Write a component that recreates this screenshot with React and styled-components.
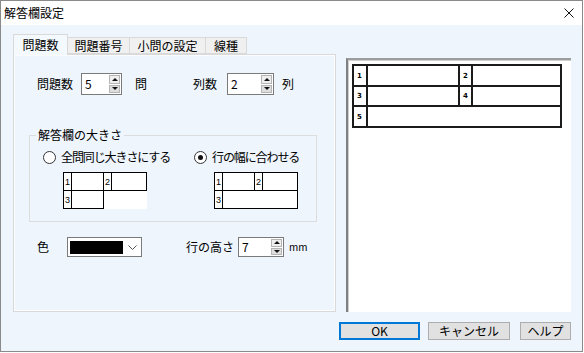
import React from "react";
import styled, { createGlobalStyle } from "styled-components";

const GlobalStyle = createGlobalStyle`
  html, body {
    margin: 0;
    padding: 0;
    background: #ffffff;
  }
  body {
    font-family: "Noto Sans CJK JP", "Noto Sans", sans-serif;
    font-size: 12px;
    color: #000;
  }
`;

const Window = styled.div`
  width: 583px;
  height: 352px;
  box-sizing: border-box;
  border: 1px solid #8a8a8a;
  background: #eef5fd;
  display: flex;
  flex-direction: column;
`;

const TitleBar = styled.div`
  height: 24px;
  flex: none;
  background: #fff;
  display: flex;
  align-items: center;
  justify-content: space-between;
  padding: 0 8px 0 3px;
  line-height: 14px;
`;

const Body = styled.div`
  flex: 1;
  padding: 9px 11px 0 12px;
  display: flex;
  flex-direction: column;
`;

const MainRow = styled.div`
  display: flex;
  gap: 10px;
`;

const TabArea = styled.div`
  width: 323px;
  display: flex;
  flex-direction: column;
`;

const TabStrip = styled.div`
  height: 20px;
  display: flex;
  align-items: flex-end;
`;

const Tab = styled.div`
  box-sizing: border-box;
  width: ${(p) => p.$w}px;
  height: ${(p) => (p.$active ? 21 : 17)}px;
  margin-bottom: ${(p) => (p.$active ? -1 : 0)}px;
  margin-left: ${(p) => (p.$first ? 0 : -1)}px;
  border: 1px solid #d9d9d9;
  border-bottom: ${(p) => (p.$active ? "none" : "1px solid #d9d9d9")};
  background: ${(p) => (p.$active ? "#f4f9fe" : "#f0f0f0")};
  position: relative;
  z-index: ${(p) => (p.$active ? 2 : 1)};
  display: flex;
  align-items: center;
  justify-content: center;
  line-height: 14px;
  padding-top: ${(p) => (p.$active ? 0 : 1)}px;
`;

const Panel = styled.div`
  height: 258px;
  box-sizing: border-box;
  border: 1px solid #d9d9d9;
  box-shadow: inset 0 0 0 1px #fafcff;
  background: #eef5fd;
  display: flex;
  flex-direction: column;
`;

const FieldRow = styled.div`
  display: grid;
  grid-template-columns: ${(p) => p.$cols};
  align-items: center;
  height: ${(p) => p.$h}px;
  margin: ${(p) => p.$mt}px 0 0 23px;
  line-height: 14px;
`;

const Unit = styled.span`
  padding-left: ${(p) => p.$pl}px;
  font-size: ${(p) => p.$fs || 12}px;
`;

const SpinBox = styled.div`
  box-sizing: border-box;
  width: ${(p) => p.$w}px;
  height: ${(p) => p.$h}px;
  border: 1px solid #7a7a7a;
  background: #fff;
  display: flex;
  align-items: stretch;
  padding: 1px;
`;

const SpinValue = styled.div`
  flex: 1;
  padding-left: 2px;
  display: flex;
  align-items: center;
  line-height: 14px;
`;

const SpinButtons = styled.div`
  width: 11px;
  display: flex;
  flex-direction: column;
  gap: 1px;
`;

const SpinButton = styled.div`
  flex: 1;
  box-sizing: border-box;
  border: 1px solid #b4b4b4;
  background: ${(p) => (p.$down ? "#dedede" : "#efefef")};
  display: flex;
  align-items: center;
  justify-content: center;
`;

const Arrow = styled.span`
  width: 0;
  height: 0;
  border-left: 3px solid transparent;
  border-right: 3px solid transparent;
  ${(p) =>
    p.$down ? "border-top: 3px solid #111;" : "border-bottom: 3px solid #111;"}
`;

const GroupBox = styled.div`
  box-sizing: border-box;
  width: 288px;
  height: 87px;
  margin: 40px 0 0 15px;
  border: 1px solid #dcdcdc;
  position: relative;
`;

const GroupTitle = styled.span`
  position: absolute;
  top: -9px;
  left: 6px;
  padding: 0 2px;
  background: #eef5fd;
  line-height: 16px;
`;

const OptionGrid = styled.div`
  display: grid;
  grid-template-columns: 151px auto;
  padding-left: ${(p) => p.$pl}px;
  margin-top: ${(p) => p.$mt}px;
`;

const RadioLabel = styled.div`
  display: flex;
  align-items: center;
  gap: 4px;
  height: 16px;
  line-height: 14px;
  letter-spacing: -1.1px;
`;

const RadioCircle = styled.span`
  box-sizing: border-box;
  width: 13px;
  height: 13px;
  border-radius: 50%;
  border: 1px solid #333;
  background: #fff;
  display: flex;
  align-items: center;
  justify-content: center;
  margin-right: 1px;
  &::after {
    content: "";
    width: 5px;
    height: 5px;
    border-radius: 50%;
    background: ${(p) => (p.$checked ? "#111" : "transparent")};
  }
`;

const MiniTable = styled.div`
  width: 84px;
  height: 37px;
  box-sizing: border-box;
  background: #fff;
  padding: 1px;
  display: grid;
  grid-template-columns: 7px 31px 7px 34px;
  grid-template-rows: 17px 17px;
  gap: 1px;
`;

const MiniCell = styled.div`
  outline: 1px solid #000;
  grid-column: ${(p) => p.$span || "auto"};
  font-size: 9px;
  display: flex;
  align-items: center;
  padding-left: 1px;
  font-family: "Liberation Sans", Arial, sans-serif;
`;

const Blank = styled.div`
  grid-column: span 2;
`;

const ColorCombo = styled.div`
  box-sizing: border-box;
  width: 75px;
  height: 20px;
  border: 1px solid #7a7a7a;
  background: #fff;
  display: flex;
  align-items: center;
  padding: 0 4px 0 2px;
  gap: 5px;
`;

const Swatch = styled.div`
  width: 53px;
  height: 13px;
  background: #000;
`;

const Preview = styled.div`
  width: 225px;
  height: 254px;
  box-sizing: border-box;
  margin-top: 24px;
  background: #fff;
  border-top: 2px solid #9c9c9c;
  border-left: 2px solid #808080;
  box-shadow: inset 1px 1px 0 #cfcfcf;
  padding: 4px 0 0 4px;
`;

const SheetTable = styled.div`
  width: 210px;
  height: 64px;
  box-sizing: border-box;
  padding: 2px;
  background: #1b1b1b;
  display: grid;
  grid-template-columns: 12px 90px 11px 87px;
  grid-template-rows: 19px 18px 19px;
  gap: 2px;
`;

const SheetCell = styled.div`
  background: #fff;
  grid-column: ${(p) => p.$span || "auto"};
`;

const SheetNum = styled.div`
  background: #fff;
  display: flex;
  align-items: center;
  padding-left: 3px;
  font-family: "DejaVu Sans", sans-serif;
  font-weight: bold;
  font-size: 7px;
`;

const ButtonRow = styled.div`
  display: flex;
  justify-content: flex-end;
  margin-top: 10px;
`;

const Button = styled.div`
  box-sizing: border-box;
  width: ${(p) => p.$w}px;
  height: 18px;
  margin-left: ${(p) => p.$ml}px;
  background: #e1e1e1;
  border: ${(p) => (p.$primary ? "2px solid #0078d7" : "1px solid #adadad")};
  display: flex;
  align-items: center;
  justify-content: center;
  line-height: 14px;
`;

const Spinner = ({ value, w, h }) => (
  <SpinBox $w={w} $h={h}>
    <SpinValue>{value}</SpinValue>
    <SpinButtons>
      <SpinButton>
        <Arrow />
      </SpinButton>
      <SpinButton $down>
        <Arrow $down />
      </SpinButton>
    </SpinButtons>
  </SpinBox>
);

const MiniLayout = ({ fit }) => (
  <MiniTable>
    <MiniCell>1</MiniCell>
    <MiniCell />
    <MiniCell>2</MiniCell>
    <MiniCell />
    <MiniCell>3</MiniCell>
    {fit ? (
      <MiniCell $span="span 3" />
    ) : (
      <>
        <MiniCell />
        <Blank />
      </>
    )}
  </MiniTable>
);

export default function App() {
  return (
    <>
      <GlobalStyle />
      <Window>
        <TitleBar>
          <span>解答欄設定</span>
          <svg width="10" height="10" viewBox="0 0 10 10">
            <path d="M0.5 0.5 L9.5 9.5 M9.5 0.5 L0.5 9.5" stroke="#111" strokeWidth="1" />
          </svg>
        </TitleBar>
        <Body>
          <MainRow>
            <TabArea>
              <TabStrip>
                <Tab $w={55} $active $first>問題数</Tab>
                <Tab $w={63}>問題番号</Tab>
                <Tab $w={77}>小問の設定</Tab>
                <Tab $w={42}>線種</Tab>
              </TabStrip>
              <Panel>
                <FieldRow $cols="44px 41px 71px 34px 47px auto" $h={22} $mt={18}>
                  <span>問題数</span>
                  <Spinner value="5" w={41} h={22} />
                  <Unit $pl={13}>問</Unit>
                  <span>列数</span>
                  <Spinner value="2" w={47} h={22} />
                  <Unit $pl={8}>列</Unit>
                </FieldRow>
                <GroupBox>
                  <GroupTitle>解答欄の大きさ</GroupTitle>
                  <OptionGrid $pl={13} $mt={13}>
                    <RadioLabel>
                      <RadioCircle />
                      全問同じ大きさにする
                    </RadioLabel>
                    <RadioLabel>
                      <RadioCircle $checked />
                      行の幅に合わせる
                    </RadioLabel>
                  </OptionGrid>
                  <OptionGrid $pl={33} $mt={7}>
                    <MiniLayout />
                    <MiniLayout fit />
                  </OptionGrid>
                </GroupBox>
                <FieldRow $cols="30px 75px 44px 52px 46px auto" $h={20} $mt={15}>
                  <span>色</span>
                  <ColorCombo>
                    <Swatch />
                    <svg width="9" height="5" viewBox="0 0 9 5">
                      <path d="M0.5 0.5 L4.5 4.5 L8.5 0.5" fill="none" stroke="#555" strokeWidth="1" />
                    </svg>
                  </ColorCombo>
                  <span />
                  <span>行の高さ</span>
                  <Spinner value="7" w={46} h={20} />
                  <Unit $pl={5} $fs={10}>mm</Unit>
                </FieldRow>
              </Panel>
            </TabArea>
            <Preview>
              <SheetTable>
                <SheetNum>1</SheetNum>
                <SheetCell />
                <SheetNum>2</SheetNum>
                <SheetCell />
                <SheetNum>3</SheetNum>
                <SheetCell />
                <SheetNum>4</SheetNum>
                <SheetCell />
                <SheetNum>5</SheetNum>
                <SheetCell $span="span 3" />
              </SheetTable>
            </Preview>
          </MainRow>
          <ButtonRow>
            <Button $w={81} $primary>OK</Button>
            <Button $w={82} $ml={8}>キャンセル</Button>
            <Button $w={51} $ml={10}>ヘルプ</Button>
          </ButtonRow>
        </Body>
      </Window>
    </>
  );
}
